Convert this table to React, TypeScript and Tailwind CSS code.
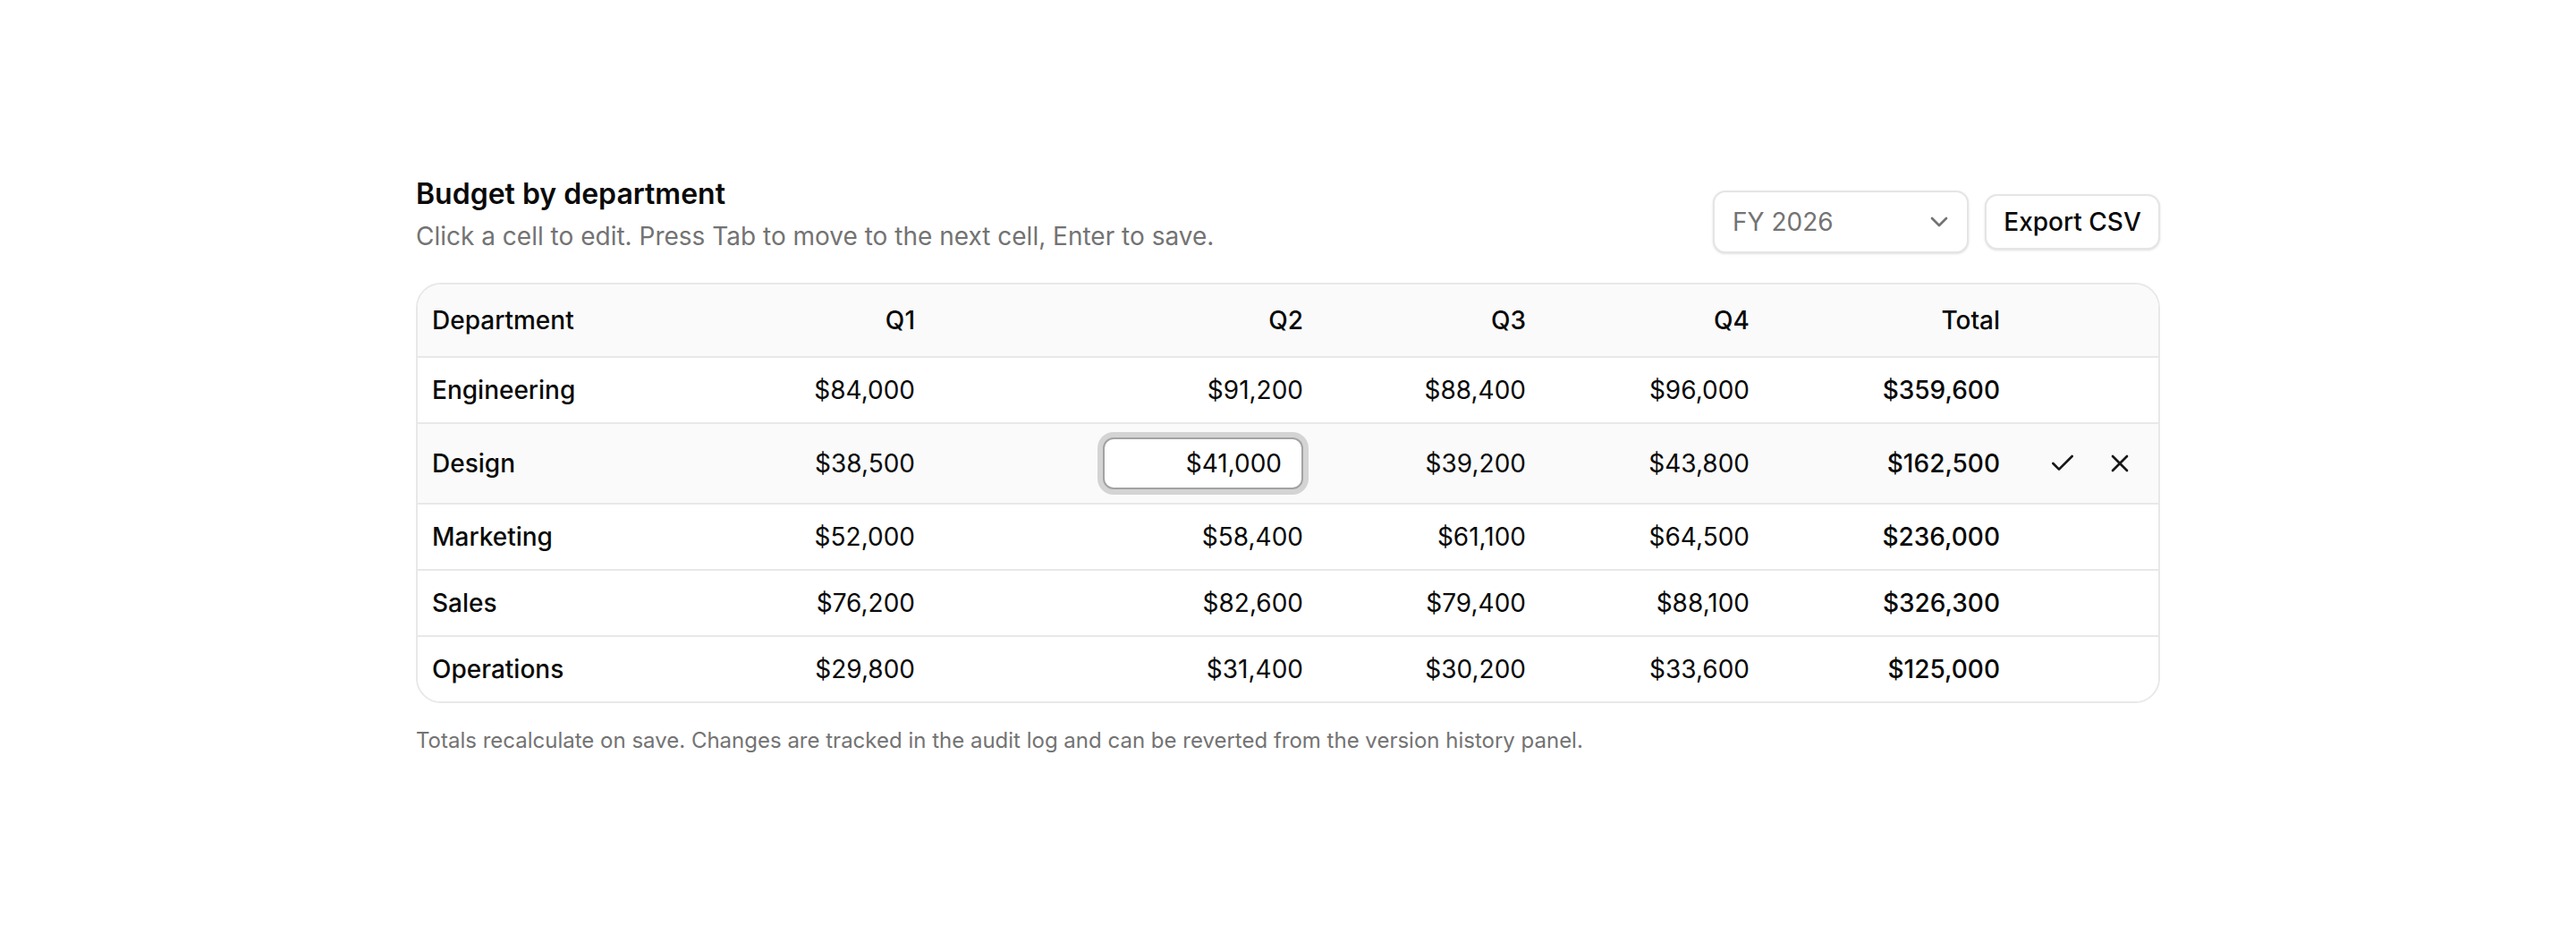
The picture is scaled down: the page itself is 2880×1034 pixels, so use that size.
import { Check, ChevronDown, X } from "lucide-react";

type Row = { dept: string; q: number[]; editing?: boolean };

const rows: Row[] = [
  { dept: "Engineering", q: [84000, 91200, 88400, 96000] },
  { dept: "Design", q: [38500, 41000, 39200, 43800], editing: true },
  { dept: "Marketing", q: [52000, 58400, 61100, 64500] },
  { dept: "Sales", q: [76200, 82600, 79400, 88100] },
  { dept: "Operations", q: [29800, 31400, 30200, 33600] },
];

const money = (n: number) => "$" + n.toLocaleString("en-US");

const cols =
  "grid grid-cols-[300px_272px_434px_249px_250px_280px_1fr] items-center";

export default function App() {
  return (
    <div className="min-h-screen bg-white text-[#0a0a0a] font-['Inter','Noto_Sans',sans-serif]">
      <div className="mx-auto w-[1950px] pt-[192px]">
        <div className="flex items-end justify-between">
          <div>
            <h1 className="text-[32px] leading-[49px] font-semibold">
              Budget by department
            </h1>
            <p className="mt-[2px] text-[28px] leading-[42px] text-[#737373]">
              Click a cell to edit. Press Tab to move to the next cell, Enter to
              save.
            </p>
          </div>
          <div className="mb-[2px] flex items-center gap-[18px]">
            <button className="flex h-[70px] w-[286px] items-center justify-between rounded-[14px] border-2 border-[#e5e5e5] bg-white pl-[20px] pr-[15px] text-[28px] text-[#737373] shadow-sm">
              <span>FY 2026</span>
              <ChevronDown size={32} strokeWidth={2} className="text-[#737373]" />
            </button>
            <button className="flex h-[62px] w-[196px] items-center justify-center rounded-[14px] border-2 border-[#e5e5e5] bg-white text-[28px] font-medium shadow-sm">
              Export CSV
            </button>
          </div>
        </div>

        <div className="mt-[31px] overflow-hidden rounded-[28px] border-2 border-[#e8e8e8]">
          <div className={`${cols} bg-[#fafafa] py-[19px] text-[28px] leading-[42px] font-medium`}>
            <div className="px-4">Department</div>
            <div className="px-4 text-right">Q1</div>
            <div className="px-4 text-right">Q2</div>
            <div className="px-4 text-right">Q3</div>
            <div className="px-4 text-right">Q4</div>
            <div className="px-4 text-right">Total</div>
            <div />
          </div>
          {rows.map((r) => {
            const total = r.q.reduce((a, b) => a + b, 0);
            return (
              <div
                key={r.dept}
                className={`${cols} border-t-2 border-[#e8e8e8] py-[15px] text-[28px] leading-[42px] ${
                  r.editing ? "bg-[#fafafa]" : "bg-white"
                }`}
              >
                <div className="px-4 font-medium">{r.dept}</div>
                {r.q.map((v, i) =>
                  r.editing && i === 1 ? (
                    <div key={i} className="flex justify-end pr-4">
                      <input
                        readOnly
                        value={money(v)}
                        className="h-[58px] w-[224px] rounded-[12px] border-2 border-[#a3a3a3] bg-white pr-[22px] text-right text-[28px] text-[#0a0a0a] outline-none ring-[6px] ring-[#d4d4d4]"
                      />
                    </div>
                  ) : (
                    <div key={i} className="px-4 text-right">
                      {money(v)}
                    </div>
                  ),
                )}
                <div className="px-4 text-right font-medium">{money(total)}</div>
                <div className="flex items-center gap-4 pl-[30px]">
                  {r.editing && (
                    <>
                      <button className="p-2 text-[#171717]">
                        <Check size={32} strokeWidth={2} />
                      </button>
                      <button className="p-2 text-[#171717]">
                        <X size={32} strokeWidth={2} />
                      </button>
                    </>
                  )}
                </div>
              </div>
            );
          })}
        </div>

        <p className="mt-6 text-[24px] leading-[36px] text-[#737373]">
          Totals recalculate on save. Changes are tracked in the audit log and
          can be reverted from the version history panel.
        </p>
      </div>
    </div>
  );
}
